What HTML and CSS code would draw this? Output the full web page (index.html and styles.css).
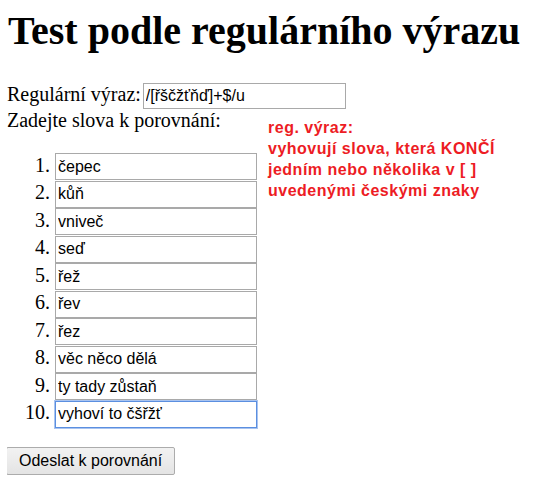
FILE: index.html
```html
<!DOCTYPE html>
<html lang="cs">
<head>
<meta charset="utf-8">
<title>Test podle regulárního výrazu</title>
<link rel="stylesheet" href="styles.css">
</head>
<body>
<h1 class="title">Test podle regulárního výrazu</h1>
<form class="form">
  <div class="regex-line">Regulární výraz: <input class="regex-input" type="text" value="/[řščžťňď]+$/u"></div>
  <div class="row">
    <div class="left">
      <div class="prompt">Zadejte slova k porovnání:</div>
      <ol class="words">
        <li><input class="word" type="text" value="čepec"></li>
        <li><input class="word" type="text" value="kůň"></li>
        <li><input class="word" type="text" value="vniveč"></li>
        <li><input class="word" type="text" value="seď"></li>
        <li><input class="word" type="text" value="řež"></li>
        <li><input class="word" type="text" value="řev"></li>
        <li><input class="word" type="text" value="řez"></li>
        <li><input class="word" type="text" value="věc něco dělá"></li>
        <li><input class="word" type="text" value="ty tady zůstaň"></li>
        <li><input class="word focused" type="text" value="vyhoví to čšřžť"></li>
      </ol>
    </div>
    <div class="note">reg. výraz:<br>vyhovují slova, která KONČÍ<br>jedním nebo několika v [ ]<br>uvedenými českými znaky</div>
  </div>
  <div class="actions"><button class="submit" type="button">Odeslat k porovnání</button></div>
</form>
</body>
</html>
```

FILE: styles.css
```css
html, body {
  background: #ffffff;
}
body {
  margin: 8px 8px 8px 7px;
  font-family: "Liberation Serif", "Times New Roman", serif;
  font-size: 20px;
  color: #000;
}
.title {
  margin: 0 0 29px 1px;
  font-size: 40px;
  font-weight: bold;
  line-height: 46px;
}
.form {
  margin: 0;
}
.regex-line {
  line-height: normal;
}
.regex-input {
  box-sizing: border-box;
  width: 203px;
  height: 26px;
  margin: 0 0 0 -3px;
  padding: 1px 2px;
  border: 1px solid #a9a9a9;
  font-family: "Liberation Sans", Arial, sans-serif;
  font-size: 16px;
  color: #000;
}
.row {
  display: flex;
  align-items: flex-start;
  gap: 11px;
}
.left {
  display: flex;
  flex-direction: column;
}
.prompt {
  line-height: normal;
}
.words {
  margin: 21px 0 0 0;
  padding-left: 48px;
}
.words li {
  line-height: normal;
}
.word {
  box-sizing: border-box;
  width: 202px;
  height: 27px;
  margin: 0 0 0.5px 0;
  padding: 1px 2px;
  border: 1px solid #a9a9a9;
  font-family: "Liberation Sans", Arial, sans-serif;
  font-size: 16px;
  color: #000;
  outline: none;
}
.word.focused {
  border: 1px solid #5b8fe0;
  box-shadow: 0 0 0 1px #a9c4f0;
}
.note {
  margin-top: 8px;
  font-family: "Liberation Sans", Arial, sans-serif;
  font-weight: bold;
  font-size: 16px;
  letter-spacing: 0.5px;
  line-height: 21px;
  color: #ed1c24;
}
.actions {
  margin-top: 19px;
}
.submit {
  box-sizing: border-box;
  height: 28px;
  margin-left: -1px;
  padding: 0 12px;
  border: 1px solid #acacac;
  border-radius: 2px;
  background: linear-gradient(#f2f2f2, #e4e4e4);
  font-family: "Liberation Sans", Arial, sans-serif;
  font-size: 16px;
  color: #000;
}
```
